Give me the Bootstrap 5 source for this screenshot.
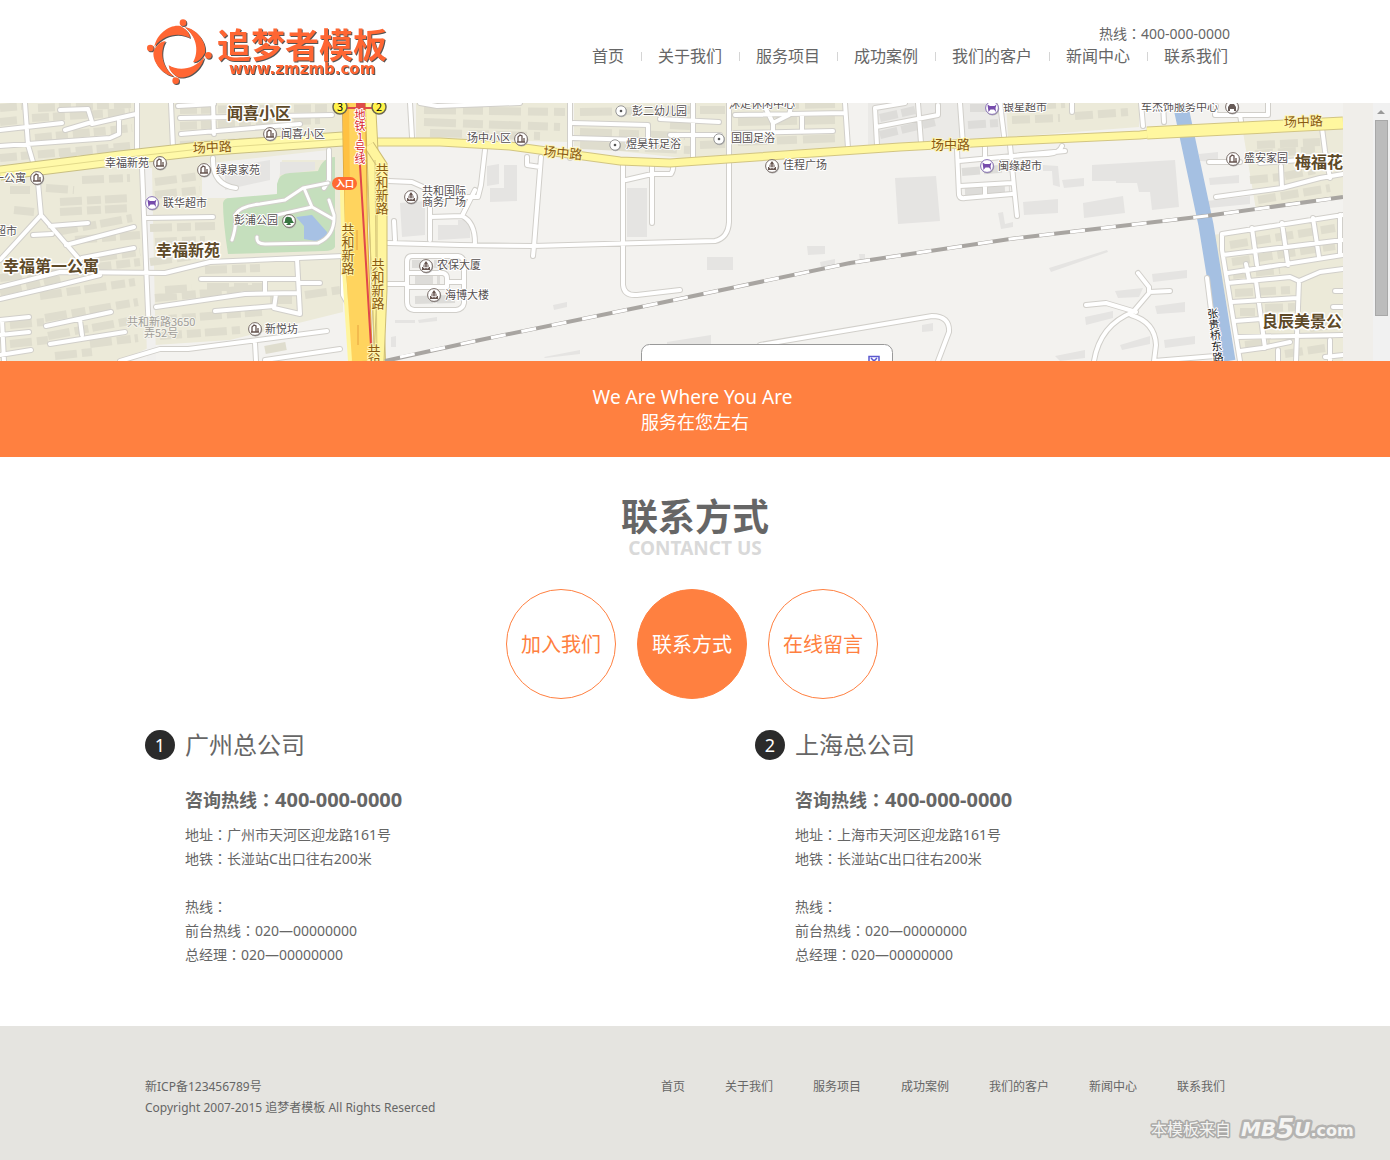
<!DOCTYPE html>
<html lang="zh-CN">
<head>
<meta charset="utf-8">
<meta name="viewport" content="width=device-width, initial-scale=1">
<title>联系方式 - 追梦者模板</title>
<link rel="stylesheet" href="https://cdn.jsdelivr.net/npm/bootstrap@5.3.0/dist/css/bootstrap.min.css">
<style>
body{font-family:"Noto Sans","Noto Sans CJK SC",sans-serif;font-size:14px;line-height:24px;color:#666;background:#fff}
a{color:inherit;text-decoration:none}
.site-wrap{max-width:1100px}
.site-head{min-height:103px}
.logo-art{width:250px;height:76px;display:block;filter:drop-shadow(1px 1px 0 #555)}
.logo-cn{font:bold 34px "Noto Sans CJK SC",sans-serif}
.logo-url{font:bold 15px "DejaVu Sans",sans-serif}
.hotline{line-height:20px;padding-right:15px}
.colon{font-family:"Noto Sans CJK TC",sans-serif;line-height:1}
.main-menu{font-size:16px;line-height:24px}
.main-menu li{padding:0 17px;display:flex;align-items:center;position:relative}
.main-menu li+li::before{content:"";width:1px;height:9px;background:#d5d5d5;position:absolute;left:0}
.map-box{height:258px;overflow:hidden;background:#f0eeea}
.map-art{width:1343px;height:258px;flex:none;display:block}
.map-art text{font-family:"Noto Sans CJK SC",sans-serif;paint-order:stroke;stroke-linejoin:round}
.lbl{font-size:11px;fill:#555050;stroke:#fff;stroke-width:2px}
.big{font-size:16px;font-weight:bold;fill:#5e4a28;stroke:#fff;stroke-width:3px}
.way{font-size:13px;fill:#8a5a10;stroke:#fff6b0;stroke-width:2px}
.upright{writing-mode:vertical-rl;text-orientation:upright}
.scroll-bar{width:17px;background:#f1f1f1;padding:7px 2px 0 2px}
.scroll-arrow{width:0;height:0;border:4px solid transparent;border-top:0;border-bottom-color:#999;margin:0 0 6px 2px}
.scroll-thumb{height:196px;background:#bcbcbc;border:1px solid #a8a8a8}
.slogan{background:#ff8040;color:#fff;font-size:18px;line-height:25px;padding:24px 0 22px}
.slogan-en{font-size:19px;padding-right:5px}
.sec-title{font-size:37px;font-weight:bold;line-height:42px;margin:0;padding-top:39px}
.sec-sub{font-size:19px;font-weight:bold;line-height:20px;color:#d9d9d9}
.tabs-round{gap:21px;margin-top:31px;padding-right:6px}
.tab-dot{width:110px;height:110px;border:1px solid #ff8040;border-radius:50%;color:#ff8040;font-size:20px;padding-top:2px}
.tab-dot.active{background:#ff8040;color:#fff}
.offices{--bs-gutter-x:120px;margin-top:29px}
.office-head{gap:10px}
.office-no{width:30px;height:30px;border-radius:50%;background:#2b2b2b;color:#fff;font-size:18px}
.office-name{font-size:24px;line-height:34px;margin:0;font-weight:normal}
.office-body{padding-left:40px}
.office-tel{font-size:18px;font-weight:bold;line-height:26px;margin:25px 0 10px}
.tel-no{font-size:20px;line-height:1}
.site-foot{background:#e5e4e0;margin-top:59px;min-height:134px;padding-top:50px;font-size:12px;line-height:21px}
.foot-menu{gap:40px;padding-right:20px}
.mark-art{position:absolute;right:34px;bottom:14px;width:206px;height:34px}
</style>
<script src="https://cdn.jsdelivr.net/npm/bootstrap@5.3.0/dist/js/bootstrap.bundle.min.js"></script>
</head>
<body>
<header class="site-head">
 <div class="container site-wrap p-0 d-flex justify-content-between">
  <a href="#" class="pt-3" aria-label="追梦者模板">
   <svg class="logo-art" viewBox="145 16 250 76" fill="#ff6633">
    <defs>
     <g id="blade"><path d="M163 80C205 88 231 130 225 158Q210 186 189 187C206 158 204 112 163 80Z"/><circle cx="235" cy="166" r="10"/></g>
    </defs>
    <g transform="translate(130 0) scale(.3333)"><use href="#blade"/><use href="#blade" transform="rotate(90 148 155)"/><use href="#blade" transform="rotate(180 148 155)"/><use href="#blade" transform="rotate(270 148 155)"/></g>
    <text class="logo-cn" x="217" y="58">追梦者模板</text><text class="logo-url" x="229" y="74">www.zmzmb.com</text>
   </svg>
  </a>
  <div class="text-end pt-4">
   <div class="hotline">热线<span class="colon" lang="zh-TW">：</span>400-000-0000</div>
   <nav><ul class="main-menu list-unstyled d-flex m-0">
    <li><a href="#">首页</a></li><li><a href="#">关于我们</a></li><li><a href="#">服务项目</a></li><li><a href="#">成功案例</a></li><li><a href="#">我们的客户</a></li><li><a href="#">新闻中心</a></li><li><a href="#">联系我们</a></li>
   </ul></nav>
  </div>
 </div>
</header>

<div class="map-box d-flex">
<svg class="map-art" viewBox="0 103 1343 258" role="img" aria-label="地图">
 <defs>
  <g id="minor">
   <path d="M0 130L62 123M25 103L28 145L33 162M60 110L88 109L92 122L65 130M92 124L136 114M0 146L110 138L119 134L119 118M137 103L137 152M171 103L173 148M178 106L214 104M180 118L332 115M181 134L300 124M213 103L214 134M142 168L149 335M38 182L41 215L80 260M41 215L0 260M33 235L52 234M50 226L88 223M66 245L134 227M82 258L134 248M146 218L213 217M0 287L60 272L165 273L210 262L343 256M0 299L60 285L100 275M201 279L297 279M156 307L245 294L298 293M265 280L265 293M297 259L300 314L274 308L276 294M215 311L274 306M299 283L320 283M0 320L29 317M2 320L4 361M0 335L29 332M46 326L111 312M80 320L82 335M50 344L125 332M0 355L31 350M120 361L160 349L188 349L327 331M255 343L256 361M265 360L340 349M213 158Q212 185 236 188M329 150L329 180L324 188"/>
   <path d="M343 256L343 295L348 304M410 103L412 137M570 103L570 158M420 103L437 106L520 103M573 123L648 125M573 138L640 140M648 125L648 140M485 150L481 185L478 197L432 197M388 181L412 182L430 190L430 240M430 217L462 216L475 190M462 216Q475 222 475 243M394 221L395 240M388 243L460 245L533 246L640 243L715 241Q728 238 729 222L729 103M527 157L527 165L540 167M541 157L534 246L533 256M623 163L623 285Q624 296 637 295L680 290M626 180L652 174L671 174Q674 170 673 163M652 163L652 223M412 256H458Q464 257 464 264V303Q463 309 456 310H414Q407 309 407 302V262Q407 256 412 256M407 273H443Q447 274 447 278V287H407M447 282H464M388 284H407M693 103V160M660 119L719 122M670 135L720 135M763 103L773 123L789 115L792 103M773 123L773 133M735 115L845 113M735 133L833 131M802 115V132M845 103L848 148M877 145L875 108L905 103M876 127L938 115L938 105M918 103L921 143M960 103L963 145M1000 103L1004 136M957 150L959 195Q960 199 965 198L1012 194M959 161L1065 151M960 186L1012 183M985 147V160M985 186V196M1010 145L1014 187L1017 216M1062 146Q1060 153 1048 154L1020 155M760 345L932 316Q950 316 949 332L938 361M1141 103L1143 126M1163 103L1164 122M1072 103V112"/>
   <path d="M1138 273L1149 287V292L1170 291M1150 292L1133 312Q1100 325 1094 361M1086 305L1106 303L1136 312M1131 315Q1155 322 1156 345L1154 361M1154 361L1215 356M1268 103L1268 115L1215 115L1216 106M1240 115L1241 121M1322 128L1325 151L1330 178M1260 163L1300 160M1209 162L1240 162M1216 197L1282 188L1320 178L1343 174M1281 166L1282 188M1207 278L1211 310M1222 234L1343 215M1222 234L1222 250L1240 361M1223 255L1343 240M1228 273L1343 255M1228 283L1290 277L1299 281L1320 272L1343 269M1252 228L1257 265M1282 223L1288 265M1313 218L1319 257M1340 215V255M1246 264L1249 280M1256 281L1265 348M1299 281L1296 361M1232 302L1297 298M1235 321L1261 319M1237 337L1343 335M1240 351L1262 348L1290 342M1278 350V361M1330 340V361M1343 355L1325 357M1335 291H1343M1333 307H1343"/>
  </g>
  <g id="pin"><circle cx=".6" cy=".8" r="6.7" fill="#aaa"/><circle r="6.4" fill="#fff" stroke="#776b66"/></g>
  <g id="home"><use href="#pin"/><path d="M-3 3V-2L-1-4L1-3V3M3-1V3M-4 3H4" fill="none" stroke="#66544f" stroke-width="1.3"/></g>
  <g id="tower"><use href="#pin"/><path d="M-.5-4.500H.5L2.500-1V1H4V4H-4V1H-2.500V-1Z" fill="#66544f"/><path d="M-1.200-2V3M1.200-2V3M-3 1.500H3" stroke="#fff" stroke-width=".7"/></g>
  <g id="shop"><circle cx=".6" cy=".8" r="6.7" fill="#aaa"/><circle r="6.4" fill="#fff" stroke="#8871b5"/><path d="M-4.500-3.500L-2-2H2.500L4.500-3.500L3.500 0L4 4L2 1.500H-1.500L-3.500 4Z" fill="#764cac"/></g>
  <g id="spot"><circle cx=".5" cy=".7" r="5.5" fill="#aaa"/><circle r="5.2" fill="#fff" stroke="#999"/><circle r="1.3" fill="#555"/></g>
 </defs>
 <path fill="#f3f2ef" d="M0 103H1343V361H0Z"/>
 <g fill="#ecead9">
  <path d="M0 103H343V312L230 340L155 345L120 361H0Z"/><path d="M416 103H568V142L416 138ZM574 103H844L846 149L700 160L574 146ZM1006 103H1139V127L1008 137ZM1243 132L1343 120V196L1256 210ZM1213 235L1343 215V361H1238Z"/>
 </g>
 <path fill="#ebeae7" d="M868 103H1000V140L868 148Z"/>
 <path fill="#f1f0ee" d="M202 164L328 150V160H282L276 198H224L202 198Z"/>
 <path fill="#f1f0ee" d="M143 168H152L156 361H147Z"/>
 <g fill="none" stroke="#dfddce" stroke-width="8">
  <path stroke-dasharray="17 4 12 5" d="M0 108L22 106M38 108L132 104M32 118L130 112M0 122L20 120M35 138L132 128M0 158L130 146M180 110L330 108M180 126L320 120M180 145L330 138M60 158L130 150"/>
  <path stroke-dasharray="22 5 14 4" d="M10 190H30M46 188L74 190M82 180L130 178M60 202L130 198M60 212L130 208M14 210L34 212M56 232L132 218M75 240L140 235M95 258L140 252M150 228L215 226M150 262L200 255M0 278L140 262M0 292L60 278M40 296L135 282M165 290L192 288M205 270L260 268M207 287L262 287M155 298L260 288M155 320L262 312M10 325L44 322M45 318L138 302M48 336L135 320M10 344L48 340M90 344L138 338M55 356L92 352M160 336L240 330M270 300L295 300M305 295L340 290M265 350L286 346M155 182L200 176M155 195L200 190M155 242L205 240"/>
  <path stroke-dasharray="32 7 20 6" d="M424 110L565 112M424 122L560 127M430 133L540 136M580 112L690 110M580 132L685 136M580 145L690 150M670 125L690 126M700 110L725 110M740 106L835 104M738 122L840 120M738 142L840 138M700 145L725 144"/>
  <path stroke-dasharray="18 5" d="M1015 107L1065 104M1012 120L1060 118M1075 116L1128 112M1257 145L1320 142M1255 154L1315 150M1250 180L1280 177M1285 176L1315 170M1258 200L1330 188M1230 245L1335 228M1232 262L1335 246M1233 275L1280 270M1235 293L1290 290M1240 312L1255 312M1265 308L1295 307M1265 325L1290 322M1245 345L1270 342M1285 354L1325 348M1310 328L1335 325"/>
 </g>
 <g fill="#e5e4e2">
  <path d="M225 168L270 160V180L225 190ZM280 162H315V170L280 175ZM487 166L499 164V184L487 186ZM504 165H517V201L490 202V188H504ZM400 203L425 201V235L402 237ZM438 225H458V220H470V238L438 240ZM627 188H647V237H627ZM895 178L936 176L940 221L898 224ZM707 257H733V270H707ZM807 246H825V254L808 255ZM820 262L835 259V265L821 267ZM848 262L865 258V262L849 266ZM859 254H865V259L860 261ZM667 342L711 335V344H667ZM922 325L933 323V331L922 332ZM1092 165L1175 160L1179 207L1152 210L1150 192H1139L1137 183H1116V181H1092ZM1083 203L1123 196L1125 213L1084 218ZM1023 202L1058 199V213L1024 215ZM1062 180L1084 178V186L1064 188ZM1043 165L1058 166L1060 187L1053 185L1052 171H1043ZM998 213L1003 212L1005 224L1013 222V227L1001 229ZM1199 154L1218 152V162L1200 161ZM1209 178L1239 175V183L1210 185ZM1207 201L1250 196V204L1209 208ZM1049 268L1107 250L1108 252L1051 272ZM1152 274L1187 270V278L1153 282ZM1115 291L1143 288L1139 297L1118 298ZM1085 317L1113 311V318L1086 325ZM1155 306L1185 302V312L1157 314ZM1164 340L1195 336V344L1165 348ZM1120 345L1150 336V344L1122 350ZM1055 356L1085 350V358L1060 361ZM395 320H415V323H395ZM418 320L437 317V321L419 323ZM391 337L396 336V347H391ZM544 357L580 350V354L545 358ZM553 305L567 302V307L554 310Z"/>
  <path fill="none" stroke="#dddcd9" stroke-width="8" stroke-dasharray="18 4" d="M880 118L915 110M880 135L935 122M968 125L998 123M970 108L995 108M962 172L1010 168M965 192L1010 190M415 280L440 280M415 300L455 299M412 264H460"/>
 </g>
 <path fill="#c5dfbd" d="M223 203Q224 198 230 198L277 194V184Q279 173 290 173L318 171Q323 157 335 157V247Q333 251 324 251L228 254Q223 222 223 203Z"/>
 <path fill="#a7c1e4" d="M296 217L312 215L327 232V238L315 241L304 239V226Z"/>
 <path fill="none" stroke="#a5c0e2" stroke-width="15" d="M1180 103L1206 225L1228 361"/>
 <g fill="none" stroke-linecap="round" stroke-linejoin="round">
  <use href="#minor" stroke="#d1cfca" stroke-width="6"/><use href="#minor" stroke="#fff" stroke-width="4"/>
  <path d="M232 240Q237 225 235 215Q240 206 260 204L285 200L303 188L328 183M304 188L312 207L333 219M312 207L277 215M257 237Q256 244 265 244L318 243Q335 236 334 215L329 200" stroke="#d1cfca" stroke-width="5"/><path d="M232 240Q237 225 235 215Q240 206 260 204L285 200L303 188L328 183M304 188L312 207L333 219M312 207L277 215M257 237Q256 244 265 244L318 243Q335 236 334 215L329 200" stroke="#fff" stroke-width="3"/>
 </g>
 <g fill="none">
  <path stroke="#c9bf82" stroke-width="15" d="M0 173L120 158L200 149L343 139"/><path stroke="#fff9a8" stroke-width="13" d="M0 173L120 158L200 149L343 139"/><path stroke="#e2d98a" d="M0 173L120 158L200 149L343 139"/>
  <path stroke="#d2c582" stroke-width="9" d="M366 142L440 142L510 146L620 161L670 163L900 147L1010 141L1140 135L1160 133"/><path stroke="#fff79f" stroke-width="7" d="M366 142L440 142L510 146L620 161L670 163L900 147L1010 141L1140 135L1160 133"/>
  <path stroke="#d2c582" stroke-width="13" d="M1147 133L1343 123"/><path stroke="#fff79f" stroke-width="11" d="M1147 133L1343 123"/>
  <path stroke="#cdbd74" stroke-width="12" d="M370 103L372 140L380 361"/><path stroke="#fff59d" stroke-width="10" d="M370 103L372 140L380 361"/>
  <path stroke="#cdbd74" stroke-width="11" d="M369 145L382 165V290L379 361"/><path stroke="#fff59d" stroke-width="9" d="M369 145L382 165V290L379 361"/>
  <path stroke="#d8c77a" d="M366 150L375 361M375 160L377 361"/>
  <path stroke="#d9a440" stroke-width="24" d="M354 103L356 230L361 361"/><path stroke="#ffd45e" stroke-width="22" d="M354 103L356 230L361 361"/><path stroke="#ffc142" stroke-width="6" d="M346 103L347 190"/>
  <path stroke="#fff59d" stroke-width="4" d="M342 190L344 270L350 361"/><path stroke="#e6a23e" d="M357 230V250M358 325V345"/>
  <path stroke="#e0474c" stroke-width="2" d="M360 103V165L371 346"/>
  <path stroke="#a8a5a1" stroke-width="4" d="M385 361L480 340L660 303L850 263L1010 239L1206 216L1343 197"/><path stroke="#fff" stroke-width="3" stroke-dasharray="15 16" d="M400 357L480 340L660 303L850 263L1010 239L1206 216L1343 197"/>
 </g>
 <path fill="#de4c48" d="M340 107H379V109H340ZM356 103H365V112H356Z"/>
 <g fill="#fff34a" stroke="#6b6750" stroke-width="1.5"><circle cx="340" cy="107" r="7"/><circle cx="379" cy="107" r="7"/></g>
 <text x="337" y="111" font-size="11">3</text><text x="376" y="111" font-size="11">2</text>
 <rect x="332" y="177" width="25" height="13" rx="6.5" fill="#ff6a32"/><text x="336" y="187" font-size="9" font-weight="bold" fill="#fff">入口</text>
 <use href="#home" x="270" y="134"/><use href="#home" x="160" y="163"/><use href="#home" x="204" y="170"/><use href="#home" x="37" y="178"/><use href="#shop" x="152" y="203"/><use href="#home" x="255" y="329"/><use href="#home" x="521" y="139"/><use href="#home" x="1233" y="159"/>
 <use href="#pin" x="289" y="221"/><path fill="#387541" d="M285 221Q285 216 289 217Q292 217 292 220L294 223H290L291 225H286L288 223H284Z"/>
 <use href="#tower" x="411" y="197"/><use href="#tower" x="426" y="266"/><use href="#tower" x="434" y="295"/><use href="#tower" x="772" y="166"/>
 <use href="#spot" x="621" y="111"/><use href="#spot" x="615" y="145"/><use href="#spot" x="719" y="139"/><use href="#shop" x="992" y="108"/><use href="#shop" x="987" y="166"/>
 <use href="#pin" x="1232" y="107"/><path fill="#675b57" d="M1228 107L1230 104H1234L1236 107V111H1234V109H1230V111H1228Z"/>
 <g class="lbl">
  <text x="281" y="138">闻喜小区</text><text x="105" y="167">幸福新苑</text><text x="216" y="174">绿泉家苑</text><text x="-7" y="182">一公寓</text><text x="163" y="207">联华超市</text><text x="-5" y="235">超市</text><text x="234" y="224">彭浦公园</text><text x="265" y="333">新悦坊</text><text x="467" y="142">场中小区</text><text x="632" y="115">彭二幼儿园</text><text x="626" y="148">煜昊轩足浴</text><text x="729" y="108">沐足休闲中心</text><text x="731" y="142">国国足浴</text><text x="783" y="169">佳程广场</text><text x="422" y="195">共和国际</text><text x="422" y="206">商务广场</text><text x="437" y="269">农保大厦</text><text x="445" y="299">海博大楼</text><text x="1003" y="111">银星超市</text><text x="998" y="170">闽缘超市</text><text x="1141" y="111">车杰饰服务中心</text><text x="1244" y="162">盛安家园</text>
 </g>
 <g font-size="11" fill="#a09d98" stroke="#f5f4ec" stroke-width="2"><text x="127" y="326">共和新路3650</text><text x="144" y="337">弄52号</text></g>
 <g class="big"><text x="227" y="119">闻喜小区</text><text x="156" y="256">幸福新苑</text><text x="3" y="272">幸福第一公寓</text><text x="1295" y="168">梅福花</text><text x="1262" y="327">良辰美景公</text></g>
 <g class="way"><text x="193" y="153" transform="rotate(-3 193 153)">场中路</text><text x="543" y="156" transform="rotate(5 543 156)">场中路</text><text x="931" y="149">场中路</text><text x="1284" y="127" transform="rotate(-2 1284 127)">场中路</text><text class="upright" x="382" y="163">共和新路</text><text class="upright" x="348" y="223">共和新路</text><text class="upright" x="378" y="258">共和新路</text><text class="upright" x="374" y="344">共和</text></g>
 <text class="upright" x="360" y="109" font-size="11" fill="#d91f2c" stroke="#fff" stroke-width="2">地铁1号线</text>
 <text class="upright" x="1212" y="308" font-size="11" fill="#222" stroke="#fff" stroke-width="2" transform="rotate(-7 1212 308)">张贵桥东路</text>
 <rect x="641.5" y="344.5" width="251" height="60" rx="8" fill="#fff" stroke="#999"/>
 <path fill="#fff" stroke="#5b58cf" stroke-width="1.5" d="M869 356.500H879V368H869ZM871 358L877 364M877 358L871 364"/>
</svg>
<div class="scroll-bar ms-auto" aria-hidden="true"><div class="scroll-arrow"></div><div class="scroll-thumb"></div></div>
</div>

<div class="slogan text-center"><div class="slogan-en">We Are Where You Are</div><div>服务在您左右</div></div>

<main class="container site-wrap p-0">
 <div class="text-center"><h1 class="sec-title">联系方式</h1><div class="sec-sub">CONTANCT US</div></div>
 <nav class="tabs-round d-flex justify-content-center">
  <a class="tab-dot d-flex align-items-center justify-content-center" href="#">加入我们</a>
  <a class="tab-dot active d-flex align-items-center justify-content-center" href="#" aria-current="page">联系方式</a>
  <a class="tab-dot d-flex align-items-center justify-content-center" href="#">在线留言</a>
 </nav>
 <div class="row offices">
  <section class="col-6">
   <div class="office-head d-flex align-items-center"><span class="office-no d-flex align-items-center justify-content-center">1</span><h2 class="office-name">广州总公司</h2></div>
   <div class="office-body"><p class="office-tel">咨询热线<span class="colon" lang="zh-TW">：</span><span class="tel-no">400-000-0000</span></p>
    <div>地址<span class="colon" lang="zh-TW">：</span>广州市天河区迎龙路161号</div><div>地铁<span class="colon" lang="zh-TW">：</span>长湴站C出口往右200米</div><br><div>热线<span class="colon" lang="zh-TW">：</span></div><div>前台热线<span class="colon" lang="zh-TW">：</span>020—00000000</div><div>总经理<span class="colon" lang="zh-TW">：</span>020—00000000</div></div>
  </section>
  <section class="col-6">
   <div class="office-head d-flex align-items-center"><span class="office-no d-flex align-items-center justify-content-center">2</span><h2 class="office-name">上海总公司</h2></div>
   <div class="office-body"><p class="office-tel">咨询热线<span class="colon" lang="zh-TW">：</span><span class="tel-no">400-000-0000</span></p>
    <div>地址<span class="colon" lang="zh-TW">：</span>上海市天河区迎龙路161号</div><div>地铁<span class="colon" lang="zh-TW">：</span>长湴站C出口往右200米</div><br><div>热线<span class="colon" lang="zh-TW">：</span></div><div>前台热线<span class="colon" lang="zh-TW">：</span>020—00000000</div><div>总经理<span class="colon" lang="zh-TW">：</span>020—00000000</div></div>
  </section>
 </div>
</main>

<footer class="site-foot position-relative">
 <div class="container site-wrap p-0 d-flex justify-content-between">
  <div><div>新ICP备123456789号</div><div>Copyright 2007-2015 追梦者模板 All Rights Reserced</div></div>
  <ul class="foot-menu list-unstyled d-flex m-0"><li><a href="#">首页</a></li><li><a href="#">关于我们</a></li><li><a href="#">服务项目</a></li><li><a href="#">成功案例</a></li><li><a href="#">我们的客户</a></li><li><a href="#">新闻中心</a></li><li><a href="#">联系我们</a></li></ul>
 </div>
 <svg class="mark-art" viewBox="0 0 206 34" fill="#f4f4f2" stroke="#aaa9a7" stroke-linejoin="round" paint-order="stroke">
  <text x="1" y="23" font-size="16" stroke-width="3" font-family="Noto Sans CJK SC, sans-serif">本模板来自</text>
  <g font-family="DejaVu Sans, sans-serif" font-weight="bold" font-style="italic" stroke-width="5" stroke="#b4b3b1"><text x="91" y="24" font-size="20">MB<tspan font-size="26" dy="2">5</tspan><tspan dy="-2">U</tspan><tspan font-size="16" font-style="normal">.com</tspan></text></g>
 </svg>
</footer>
</body>
</html>
